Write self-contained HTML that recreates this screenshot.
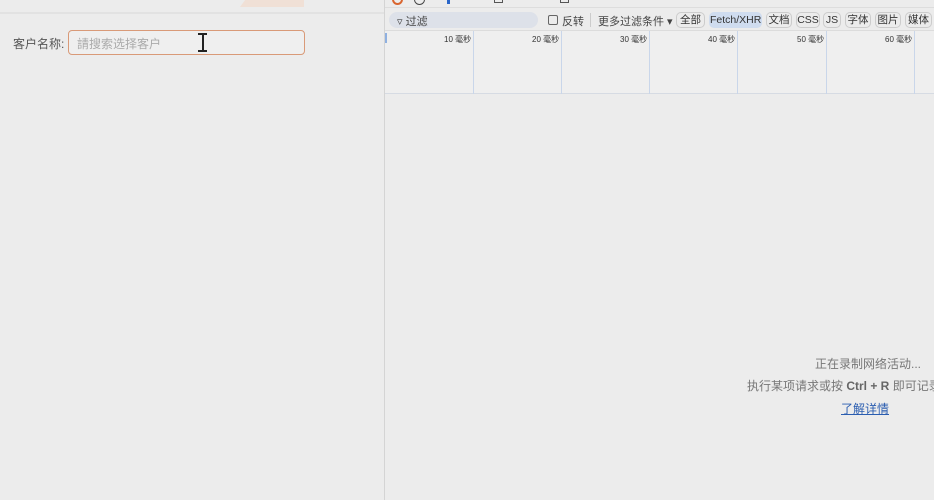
<!DOCTYPE html>
<html><head><meta charset="utf-8"><style>
*{margin:0;padding:0;box-sizing:border-box}
body{width:934px;height:500px;overflow:hidden;background:#ececec;font-family:"Liberation Sans","Noto Sans CJK SC",sans-serif;position:relative;color:#333}
.abs{position:absolute;white-space:nowrap}
.chip{position:absolute;top:12px;height:16px;border:1px solid #ccc;border-radius:5px;font-size:10.5px;line-height:14px;text-align:center;color:#333;overflow:hidden}
.tl{position:absolute;top:34px;font-size:8px;color:#333;white-space:nowrap}
.vl{position:absolute;top:31px;width:1px;height:63px;background:#c9d6ea}
</style></head><body>
<div class="abs" style="left:0;top:0;width:384px;height:14px;background:#ececec;border-bottom:2px solid #e2e2e2"></div>
<div class="abs" style="left:240px;top:0;width:64px;height:7px;background:#f0e0d6;clip-path:polygon(8% 0,100% 0,100% 100%,0 100%)"></div>
<div class="abs" style="left:13px;top:35px;font-size:12px;color:#555">客户名称:</div>
<div class="abs" style="left:68px;top:30px;width:237px;height:25px;border:1px solid #d99a78;border-radius:4px;background:#efefef"></div>
<div class="abs" style="left:77px;top:35px;font-size:12px;color:#aaa">請搜索选择客户</div>
<div class="abs" style="left:197px;top:33px;width:11px;height:19px">
<div class="abs" style="left:5px;top:1px;width:1.5px;height:17px;background:#222"></div>
<div class="abs" style="left:1px;top:0;width:9px;height:2px;background:#222"></div>
<div class="abs" style="left:1px;top:17px;width:9px;height:2px;background:#222"></div></div>
<div class="abs" style="left:384px;top:0;width:1px;height:500px;background:#d4d4d4"></div>
<div class="abs" style="left:385px;top:0;width:549px;height:8px;background:#ececec;border-bottom:1px solid #ddd;overflow:hidden">
<div class="abs" style="left:7px;top:-6px;width:11px;height:11px;border:2px solid #d9652f;border-radius:50%"></div>
<div class="abs" style="left:29px;top:-6px;width:11px;height:11px;border:1.5px solid #444;border-radius:50%"></div>
<div class="abs" style="left:62px;top:-2px;width:3px;height:6px;background:#2a66c9"></div>
<div class="abs" style="left:109px;top:-6px;width:9px;height:9px;border:1px solid #555"></div>
<div class="abs" style="left:175px;top:-6px;width:9px;height:9px;border:1px solid #555"></div>
</div>
<div class="abs" style="left:389px;top:12px;width:149px;height:16px;background:#dde1e9;border-radius:8px"></div>
<div class="abs" style="left:397px;top:13px;font-size:11px;color:#444">▿ 过滤</div>
<div class="abs" style="left:548px;top:15px;width:10px;height:10px;border:1px solid #666;border-radius:2px"></div>
<div class="abs" style="left:562px;top:13px;font-size:11px;color:#444">反转</div>
<div class="abs" style="left:590px;top:13px;width:1px;height:14px;background:#ccc"></div>
<div class="abs" style="left:598px;top:13px;font-size:11px;color:#444">更多过滤条件 ▾</div>
<div class="chip" style="left:676px;width:29px">全部</div>
<div class="chip" style="left:709px;width:53px;background:#cfdcef;border-color:#cfdcef">Fetch/XHR</div>
<div class="chip" style="left:766px;width:26px">文档</div>
<div class="chip" style="left:796px;width:24px">CSS</div>
<div class="chip" style="left:823px;width:18px">JS</div>
<div class="chip" style="left:845px;width:26px">字体</div>
<div class="chip" style="left:875px;width:26px">图片</div>
<div class="chip" style="left:905px;width:27px">媒体</div>
<div class="abs" style="left:385px;top:30px;width:549px;height:64px;background:#efefef;border-top:1px solid #dcdcdc;border-bottom:1px solid #d6dbe3"></div>
<div class="abs" style="left:385px;top:33px;width:2px;height:10px;background:#8fb0e0"></div>
<div class="vl" style="left:473px"></div><div class="vl" style="left:561px"></div><div class="vl" style="left:649px"></div>
<div class="vl" style="left:737px"></div><div class="vl" style="left:826px"></div><div class="vl" style="left:914px"></div>
<div class="tl" style="left:444px">10 毫秒</div>
<div class="tl" style="left:532px">20 毫秒</div>
<div class="tl" style="left:620px">30 毫秒</div>
<div class="tl" style="left:708px">40 毫秒</div>
<div class="tl" style="left:797px">50 毫秒</div>
<div class="tl" style="left:885px">60 毫秒</div>
<div class="abs" style="left:815px;top:355px;font-size:12px;color:#777">正在录制网络活动...</div>
<div class="abs" style="left:747px;top:377px;width:187px;overflow:hidden;font-size:12px;color:#777">执行某项请求或按 <b style="color:#666">Ctrl + R</b> 即可记录重新加载</div>
<div class="abs" style="left:841px;top:400px;font-size:12px;color:#2a5db0;text-decoration:underline">了解详情</div>
</body></html>
